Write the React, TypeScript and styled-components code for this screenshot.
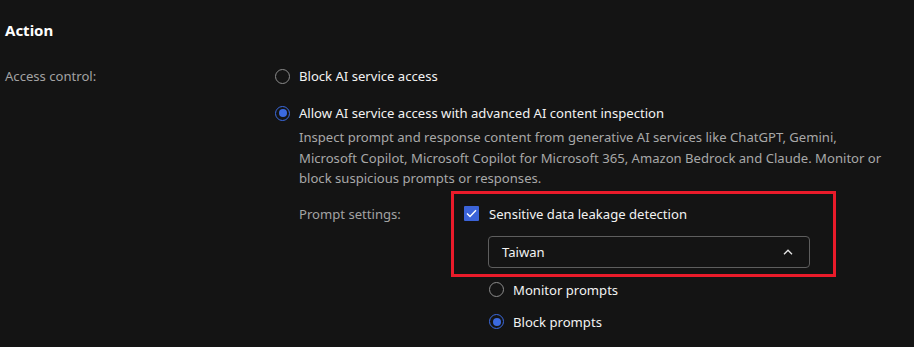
import { createGlobalStyle } from 'styled-components'
import styled from 'styled-components'

const GlobalStyle = createGlobalStyle`
  html, body {
    margin: 0;
    padding: 0;
    background: #141414;
  }
  body {
    font-family: 'Noto Sans', 'Open Sans', sans-serif;
    font-size: 13.1px;
    color: #f0f0f0;
  }
`

const Page = styled.div`
  width: 914px;
  height: 347px;
  padding-left: 5px;
  box-sizing: border-box;
  overflow: hidden;
`

const Heading = styled.h2`
  margin: 20px 0 0;
  font-size: 15px;
  line-height: 20px;
  font-weight: 700;
  color: #ffffff;
`

const FieldRow = styled.div`
  display: grid;
  grid-template-columns: 270px 1fr;
  margin-top: 26px;
`

const FieldLabel = styled.div`
  line-height: 20px;
  color: #a3a3a3;
`

const Options = styled.div`
  display: flex;
  flex-direction: column;
`

const OptionLine = styled.label<{ $gap?: number }>`
  display: flex;
  align-items: center;
  gap: 9px;
  height: 20px;
  line-height: 20px;
  margin-top: ${p => p.$gap ?? 0}px;
  color: #f2f2f2;
  cursor: pointer;
`

const RadioDot = styled.span<{ $checked?: boolean }>`
  width: 15px;
  height: 15px;
  box-sizing: border-box;
  border-radius: 50%;
  border: 1px solid ${p => (p.$checked ? '#3b6ae0' : '#8c8c8c')};
  display: flex;
  align-items: center;
  justify-content: center;
  flex-shrink: 0;

  &::after {
    content: '';
    width: 8px;
    height: 8px;
    border-radius: 50%;
    background: #3b6ae0;
    display: ${p => (p.$checked ? 'block' : 'none')};
  }
`

const Description = styled.p`
  margin: 4px 0 0 24px;
  line-height: 20.5px;
  color: #a8a8a8;
  white-space: nowrap;
`

const PromptRow = styled.div`
  display: grid;
  grid-template-columns: 152px 1fr;
  margin: 2px 0 0 24px;
`

const PromptLabel = styled.div`
  line-height: 20px;
  color: #a3a3a3;
  padding-top: 13px;
`

const Highlight = styled.div`
  width: 385px;
  box-sizing: border-box;
  border: 3px solid #ea1b2a;
  padding: 10px 23px 6px 10px;
`

const CheckLine = styled.label`
  display: flex;
  align-items: center;
  gap: 10px;
  height: 20px;
  color: #f2f2f2;
`

const CheckBox = styled.span`
  width: 15px;
  height: 15px;
  background: #3b63d8;
  border-radius: 1px;
  display: flex;
  align-items: center;
  justify-content: center;
  flex-shrink: 0;
`

const Select = styled.div`
  margin: 12px 0 0 24px;
  height: 32px;
  box-sizing: border-box;
  border: 1px solid #5e5e5e;
  border-radius: 4px;
  display: flex;
  align-items: center;
  justify-content: space-between;
  padding: 0 16px 0 13px;
  color: #f2f2f2;
`

const SubOptions = styled.div`
  display: flex;
  flex-direction: column;
  padding-left: 38px;
  margin-top: 3px;
`

const Radio = ({ checked, label, gap }: { checked?: boolean; label: string; gap?: number }) => (
  <OptionLine $gap={gap}>
    <RadioDot $checked={checked} />
    <span>{label}</span>
  </OptionLine>
)

export default function App() {
  return (
    <Page>
      <GlobalStyle />
      <Heading>Action</Heading>
      <FieldRow>
        <FieldLabel>Access control:</FieldLabel>
        <Options>
          <Radio label='Block AI service access' />
          <Radio checked gap={17} label='Allow AI service access with advanced AI content inspection' />
          <Description>
            Inspect prompt and response content from generative AI services like ChatGPT, Gemini,
            <br />
            Microsoft Copilot, Microsoft Copilot for Microsoft 365, Amazon Bedrock and Claude. Monitor or
            <br />
            block suspicious prompts or responses.
          </Description>
          <PromptRow>
            <PromptLabel>Prompt settings:</PromptLabel>
            <div>
              <Highlight>
                <CheckLine>
                  <CheckBox>
                    <svg width='11' height='9' viewBox='0 0 11 9'>
                      <path d='M1 4.6 L4 7.6 L10 1.2' fill='none' stroke='#fff' strokeWidth='1.4' />
                    </svg>
                  </CheckBox>
                  <span>Sensitive data leakage detection</span>
                </CheckLine>
                <Select>
                  <span>Taiwan</span>
                  <svg width='10' height='6' viewBox='0 0 10 6'>
                    <path d='M1 5.2 L5 1.2 L9 5.2' fill='none' stroke='#e6e6e6' strokeWidth='1.3' />
                  </svg>
                </Select>
              </Highlight>
              <SubOptions>
                <Radio label='Monitor prompts' />
                <Radio checked gap={12} label='Block prompts' />
              </SubOptions>
            </div>
          </PromptRow>
        </Options>
      </FieldRow>
    </Page>
  )
}
